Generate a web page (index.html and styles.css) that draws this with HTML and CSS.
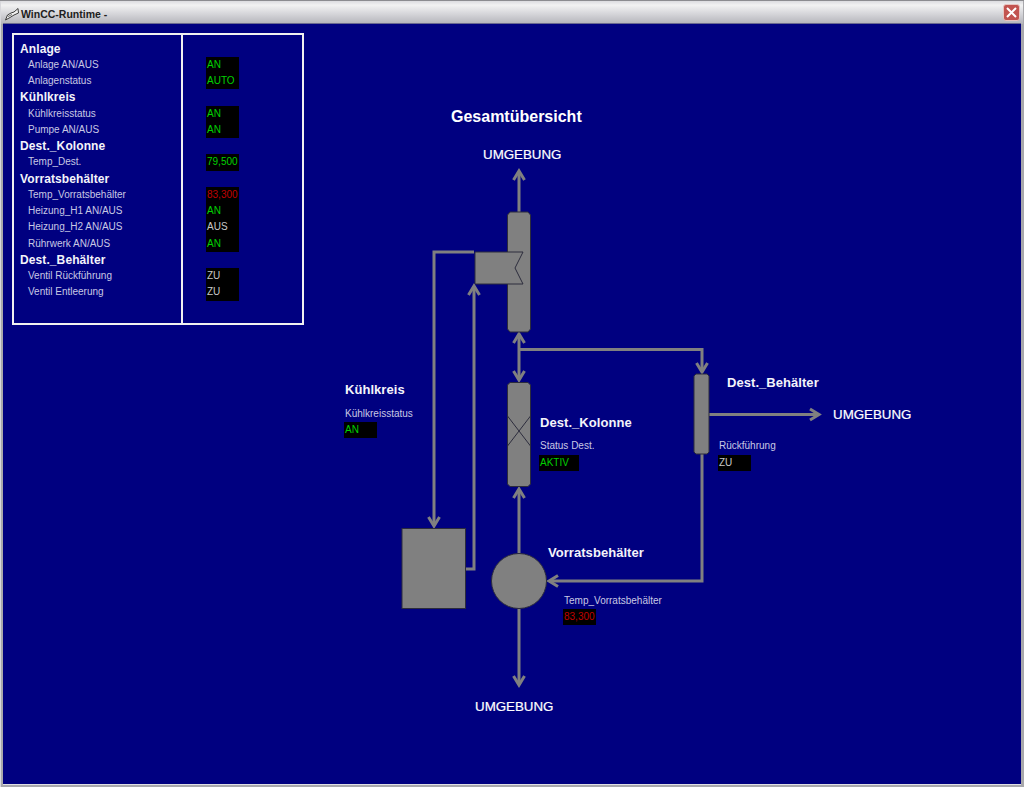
FILE: index.html
```html
<!DOCTYPE html>
<html lang="de">
<head>
<meta charset="UTF-8" />
<title>WinCC-Runtime</title>
<link rel="stylesheet" href="styles.css">
</head>
<body>

  <div class="window">

    <!-- Title bar -->
    <div class="titlebar">
      <svg class="app-icon" width="14" height="14" viewBox="0 0 14 14">
        <path d="M0.5 13 L2.5 8 L6 6 L9 5 L13 1.5 L13.5 6 L9 8 L5 10.5 Z" fill="#f2f2f2" stroke="#3c3c3c" stroke-width="1" />
        <path d="M3 9.5 L7 7.5" fill="none" stroke="#6a6a6a" stroke-width="1" />
      </svg>
      <span class="title">WinCC-Runtime -</span>
      <div class="close-btn">
        <svg width="11" height="11" viewBox="0 0 11 11">
          <path d="M1 1 L10 10 M10 1 L1 10" stroke="#fff" stroke-width="2" />
        </svg>
      </div>
    </div>

    <div class="canvas">

      <!-- Status table -->
      <div class="panel">
        <div class="names">
          <div class="head">Anlage</div>
          <div class="sub">Anlage AN/AUS</div>
          <div class="sub">Anlagenstatus</div>
          <div class="head">Kühlkreis</div>
          <div class="sub">Kühlkreisstatus</div>
          <div class="sub">Pumpe AN/AUS</div>
          <div class="head">Dest._Kolonne</div>
          <div class="sub">Temp_Dest.</div>
          <div class="head">Vorratsbehälter</div>
          <div class="sub">Temp_Vorratsbehälter</div>
          <div class="sub">Heizung_H1 AN/AUS</div>
          <div class="sub">Heizung_H2 AN/AUS</div>
          <div class="sub">Rührwerk AN/AUS</div>
          <div class="head">Dest._Behälter</div>
          <div class="sub">Ventil Rückführung</div>
          <div class="sub">Ventil Entleerung</div>
        </div>
        <div class="values">
          <div class="blank"></div>
          <div class="val green">AN</div>
          <div class="val green">AUTO</div>
          <div class="blank"></div>
          <div class="val green">AN</div>
          <div class="val green">AN</div>
          <div class="blank"></div>
          <div class="val green">79,500</div>
          <div class="blank"></div>
          <div class="val red">83,300</div>
          <div class="val green">AN</div>
          <div class="val grey">AUS</div>
          <div class="val green">AN</div>
          <div class="blank"></div>
          <div class="val grey">ZU</div>
          <div class="val grey">ZU</div>
        </div>
      </div>

      <!-- Process diagram, coordinates are window pixels -->
      <svg class="diagram" width="1018" height="760" viewBox="3 24 1018 760">
        <g class="pipes">
          <path d="M519 212 V171" />
          <path d="M513.5 180 L519 171 L524.5 180" />
          <path d="M474 252 H434 V526" />
          <path d="M428.5 517 L434 526 L439.5 517" />
          <path d="M466 569 H474 V286" />
          <path d="M468.5 295 L474 286 L479.5 295" />
          <path d="M519 334 V380" />
          <path d="M513.5 343 L519 334 L524.5 343" />
          <path d="M513.5 371 L519 380 L524.5 371" />
          <path d="M519 349.5 H702 V372" />
          <path d="M696.5 363 L702 372 L707.5 363" />
          <path d="M709 414.5 H819" />
          <path d="M810 409 L819 414.5 L810 420" />
          <path d="M702 454 V581 H549" />
          <path d="M558 575.5 L549 581 L558 586.5" />
          <path d="M519 553 V489" />
          <path d="M513.5 498 L519 489 L524.5 498" />
          <path d="M519 609 V685" />
          <path d="M513.5 676 L519 685 L524.5 676" />
        </g>
        <g class="vessels">
          <path d="M510 212 H528 L530.5 215 V329 L528 332 H510 L507.5 329 V215 Z" />
          <path d="M475 252 H523 L515 268 L523 284 H475 Z" />
          <path d="M510 382.5 H528 L530.5 385 V484 L528 486.5 H510 L507.5 484 V385 Z" />
          <path d="M696 374 H707 L709 376 V452 L707 454 H696 L694 452 V376 Z" />
          <rect x="402" y="528.5" width="63.5" height="80" />
          <circle cx="519" cy="581" r="27.5" />
        </g>
        <path class="thin" d="M507.5 416 L530.5 446 M530.5 416 L507.5 446" />
      </svg>

      <div class="label big l-title">Gesamtübersicht</div>
      <div class="label env l-env-top">UMGEBUNG</div>
      <div class="label env l-env-right">UMGEBUNG</div>
      <div class="label env l-env-bottom">UMGEBUNG</div>

      <div class="label name l-kuehl">Kühlkreis</div>
      <div class="label small l-kuehl-status">Kühlkreisstatus</div>
      <div class="val green box l-kuehl-val">AN</div>

      <div class="label name l-kolonne">Dest._Kolonne</div>
      <div class="label small l-kolonne-status">Status Dest.</div>
      <div class="val green box wide l-kolonne-val">AKTIV</div>

      <div class="label name l-vorrat">Vorratsbehälter</div>
      <div class="label small l-vorrat-temp">Temp_Vorratsbehälter</div>
      <div class="val red box l-vorrat-val">83,300</div>

      <div class="label name l-behaelter">Dest._Behälter</div>
      <div class="label small l-rueck">Rückführung</div>
      <div class="val grey box l-rueck-val">ZU</div>

    </div>
  </div>

</body>
</html>
```

FILE: styles.css
```css
* {
  box-sizing: border-box;
}

html, body {
  margin: 0;
  padding: 0;
  height: 100%;
  overflow: hidden;
  font-family: "Liberation Sans", Arial, sans-serif;
}

.window {
  display: flex;
  flex-direction: column;
  height: 787px;
  padding: 0 3px 3px;
  background: #a8a8ac;
  border-top: 1px solid #8c8c90;
  box-shadow: inset 2px 0 0 -1px #d8d8dc;
}

/* Title bar */
.titlebar {
  display: flex;
  align-items: center;
  height: 23px;
  margin: 0 -2px;
  padding: 2px 3px 0 4px;
  background: linear-gradient(#dcdce0 0%, #f2f2f2 18%, #d6d6da 55%, #b4b4ba 100%);
}

.app-icon {
  flex: none;
  margin-right: 2px;
}

.title {
  flex: 1;
  font-size: 10.5px;
  font-weight: bold;
  color: #202020;
}

.close-btn {
  display: flex;
  align-items: center;
  justify-content: center;
  width: 17px;
  height: 17px;
  margin-top: -2px;
  background: #c25450;
  border: 1px solid #e8c4c0;
  border-radius: 3px;
}

/* Main area */
.canvas {
  position: relative;
  flex: 1;
  padding: 9px 0 0 9px;
  background: #000080;
  box-shadow: 0 -1px 0 #6a6a90, 0 1px 0 #e0e0e4;
}

.panel {
  display: flex;
  width: 292px;
  height: 292px;
  border: 2px solid #f0f0f0;
}

.names, .values {
  display: grid;
  grid-auto-rows: 16.25px;
  padding-top: 5.5px;
}

.names {
  width: 169px;
  padding-left: 6px;
  border-right: 2px solid #f0f0f0;
}

.values {
  padding-left: 23px;
}

.head {
  font-size: 12px;
  font-weight: bold;
  line-height: 16px;
  letter-spacing: 0.1px;
  color: #f4f4fa;
}

.sub {
  padding-left: 8px;
  font-size: 10px;
  line-height: 16px;
  color: #c8c8e4;
}

.val {
  width: 33px;
  padding-left: 1px;
  font-size: 10px;
  line-height: 16px;
  background: #000;
  white-space: nowrap;
}

.green { color: #00d000; }
.red { color: #c00000; }
.grey { color: #c8c8c8; }

/* Diagram */
.diagram {
  position: absolute;
  left: 0;
  top: 0;
}

.pipes path {
  fill: none;
  stroke: #808080;
  stroke-width: 3;
}

.vessels path, .vessels rect, .vessels circle {
  fill: #808080;
  stroke: #2c2c3c;
  stroke-width: 1;
}

.thin {
  fill: none;
  stroke: #2c2c3c;
  stroke-width: 1;
}

.label {
  position: absolute;
  line-height: 16px;
  white-space: nowrap;
  color: #fff;
}

.big { font-size: 16px; font-weight: bold; }
.env { font-size: 13.33px; -webkit-text-stroke: 0.2px #fff; }
.name { font-size: 13px; font-weight: bold; color: #f4f4fa; letter-spacing: 0.05px; }
.small { font-size: 10px; color: #c8c8e4; }

.box {
  position: absolute;
  height: 16px;
}

.box.wide { width: 40px; }

.l-title { left: 448px; top: 85px; }
.l-env-top { left: 480px; top: 123px; }
.l-env-right { left: 830px; top: 383px; }
.l-env-bottom { left: 472px; top: 675px; }

.l-kuehl { left: 342px; top: 358px; }
.l-kuehl-status { left: 342px; top: 382px; }
.l-kuehl-val { left: 341px; top: 398px; }

.l-kolonne { left: 537px; top: 391px; }
.l-kolonne-status { left: 537px; top: 414px; }
.l-kolonne-val { left: 536px; top: 431px; }

.l-vorrat { left: 545px; top: 521px; }
.l-vorrat-temp { left: 561px; top: 569px; }
.l-vorrat-val { left: 560px; top: 585px; }

.l-behaelter { left: 724px; top: 351px; }
.l-rueck { left: 716px; top: 414px; }
.l-rueck-val { left: 715px; top: 431px; }
```
